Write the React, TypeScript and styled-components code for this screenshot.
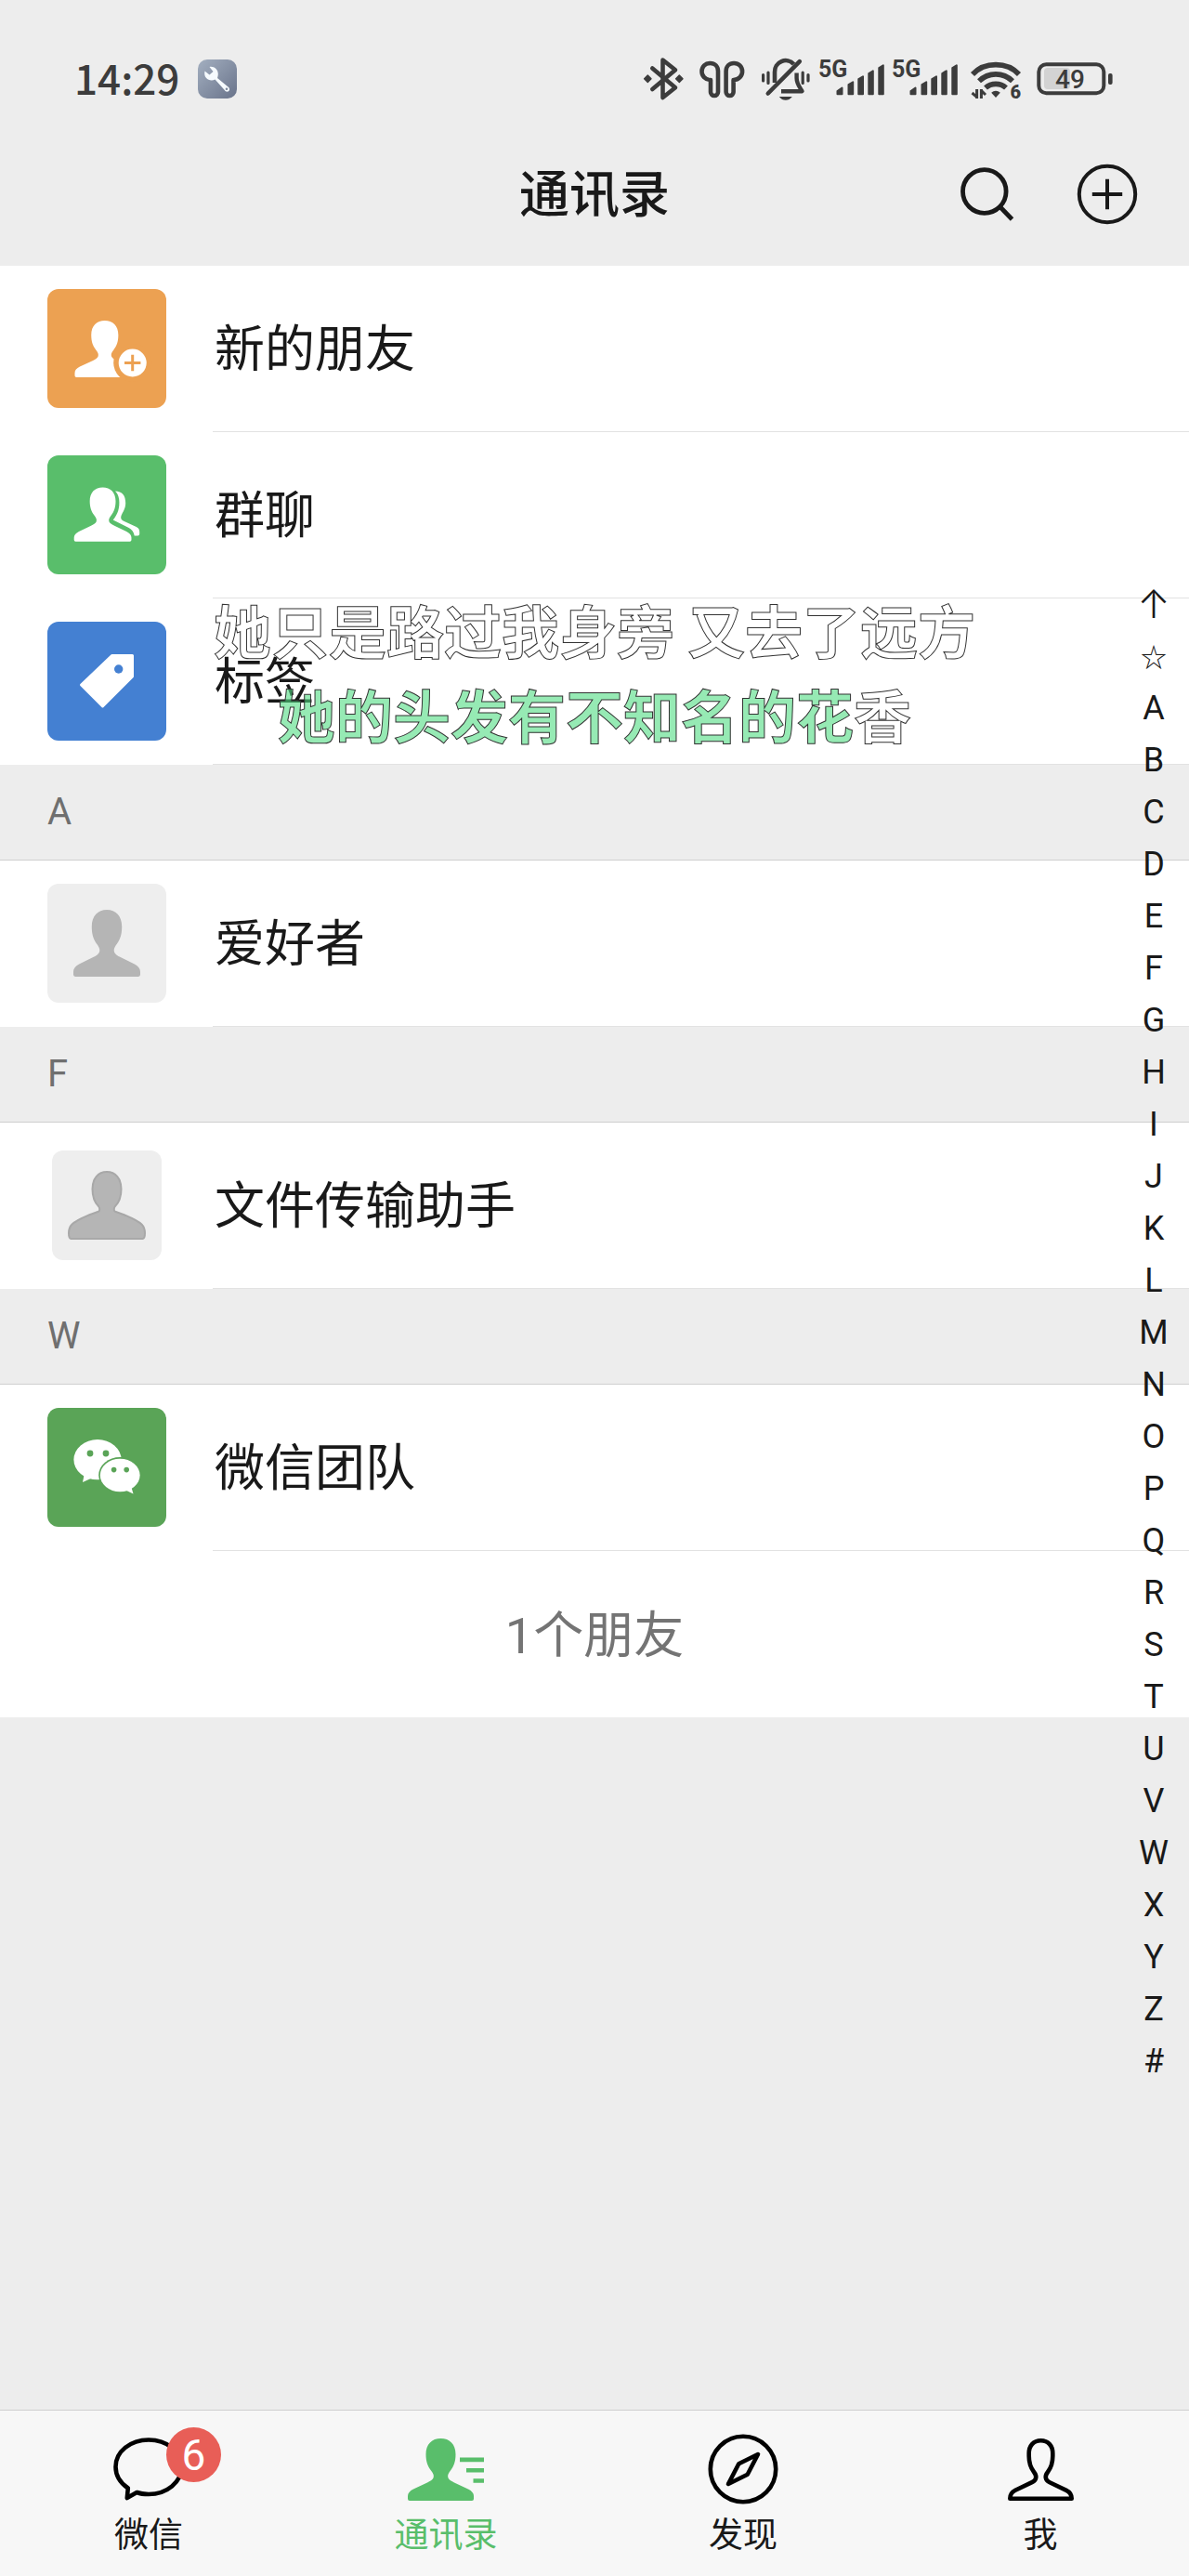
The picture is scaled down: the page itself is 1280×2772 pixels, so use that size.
import React from "react";
import styled, { createGlobalStyle } from "styled-components";

const GlobalStyle = createGlobalStyle`
  *, *::before, *::after { box-sizing: border-box; }
  body {
    margin: 0;
    background: #ededed;
    color: #191919;
    font-family: Roboto, "Noto Sans CJK SC", sans-serif;
  }
  a { color: inherit; text-decoration: none; }
  svg { display: block; flex: none; }
`;

const Screen = styled.div`
  position: relative;
  display: flex;
  flex-direction: column;
  min-height: 100vh;
`;

/* ---------- status bar ---------- */

const StatusBar = styled.div`
  display: flex;
  align-items: center;
  justify-content: space-between;
  height: 132px;
  padding: 38px 82px 0 80px;
  color: #3c3c3c;
`;

const StatusGroup = styled.div<{ $gap: number }>`
  display: flex;
  align-items: center;
  gap: ${(p) => p.$gap}px;
`;

const Clock = styled.time`
  padding-bottom: 4px;
  font-family: "Noto Sans CJK SC", sans-serif;
  font-size: 44px;
  line-height: 56px;
  font-weight: 500;
`;

const StatusText = styled.text<{ $size: number; $weight: number }>`
  font-family: Roboto, sans-serif;
  font-size: ${(p) => p.$size}px;
  font-weight: ${(p) => p.$weight};
  fill: #3c3c3c;
`;

const WrenchBadge = () => (
  <svg width="42" height="42" viewBox="0 0 42 42" aria-hidden="true">
    <defs>
      <linearGradient id="wrenchBg" x1="0" y1="0" x2="1" y2="1">
        <stop offset="0" stopColor="#a3afc0" />
        <stop offset="1" stopColor="#69738a" />
      </linearGradient>
    </defs>
    <rect width="42" height="42" rx="10" fill="url(#wrenchBg)" />
    <path
      d="M7.5 12.5 L12.5 16.5 L16.5 13 L12.5 8 C17 7 22 10.5 21.8 16 C21.7 17.5 21.4 18.8 21 20 L33.2 30 C34.8 32 34 34.3 32 34.6 C30.5 34.8 29.5 34 28.8 33 L18.5 21.5 C13.5 24.5 5.5 20.5 7.5 12.5Z"
      fill="#f6fbff"
    />
    <circle cx="31" cy="31.8" r="1.3" fill="#7d879b" />
  </svg>
);

const BluetoothIcon = () => (
  <svg width="48" height="50" viewBox="0 0 48 50" fill="none" stroke="currentColor" strokeWidth="4.6" strokeLinejoin="round" strokeLinecap="round" aria-hidden="true">
    <path d="M12.3 13.5 L37 34.3 L23.5 45 V4.5 L37 15.2 L12.3 36" />
    <path d="M7.3 21 L11 24.7 L7.3 28.4 L3.6 24.7Z M41.3 21 L45 24.7 L41.3 28.4 L37.6 24.7Z" fill="currentColor" strokeWidth="1.4" />
  </svg>
);

const budPath = "M19 26 C13 26 9.5 21.5 9.5 17 C9.5 11.5 13.5 8 18.5 8 C23.5 8 27 11.5 27 16.5 V39 A4 4 0 0 1 19 39 Z";

const EarbudsIcon = () => (
  <svg width="62" height="50" viewBox="0 0 62 50" fill="none" stroke="currentColor" strokeWidth="4.6" strokeLinejoin="round" aria-hidden="true">
    <path d={budPath} />
    <path d={budPath} transform="translate(62.6 0) scale(-1 1)" />
  </svg>
);

const MutedBellIcon = () => (
  <svg width="57" height="50" viewBox="0 0 57 50" fill="none" stroke="currentColor" strokeWidth="4.6" strokeLinecap="round" strokeLinejoin="round" aria-hidden="true">
    <path d="M18 29 V17.5 A11.8 11.8 0 0 1 38.5 9" strokeLinecap="butt" />
    <path d="M44.8 6.2 L10.8 40.5" />
    <path d="M41.6 18.5 V24 C41.6 30 44.5 33 47.5 38.2 H25" strokeWidth="4.4" strokeLinecap="butt" />
    <path d="M22.8 44 H36.8 C34.5 46.8 32.5 47.8 29.8 47.8 C27 47.8 25 46.8 22.8 44Z" fill="currentColor" stroke="none" />
    <path d="M5.6 20.5 V27 M11 18 V29.5 M48.2 18 V29.5 M54 20.5 V27" strokeWidth="3.2" />
  </svg>
);

const SignalIcon = () => (
  <svg width="71" height="50" viewBox="0 0 71 50" role="img" aria-label="5G">
    <StatusText x="0" y="23" $size={25} $weight={700}>5G</StatusText>
    <g fill="#3c3c3c" stroke="#3c3c3c" strokeWidth="2" strokeLinejoin="round">
      <path d="M20.5 41.3 V38 L25.5 34.5 V41.3Z" />
      <path d="M32.5 41.3 V31 L37.2 28.3 V41.3Z" />
      <path d="M43.3 41.3 V25 L48 22.3 V41.3Z" />
      <path d="M54.3 41.3 V19 L58.8 16.3 V41.3Z" />
      <path d="M65.3 41.3 V13 L69.8 10.3 V41.3Z" />
    </g>
  </svg>
);

const WifiIcon = () => (
  <svg width="66" height="50" viewBox="0 0 66 50" fill="none" stroke="currentColor" strokeWidth="5.6" aria-label="Wi-Fi 6" role="img">
    <path d="M8 20 C21 6.2 45 6.2 58 20" />
    <path d="M15 27.3 C25 17.4 41 17.4 51 27.3" />
    <path d="M22 34.5 C28 29 38 29 44 34.5" />
    <path d="M28.2 39.8 C31 37 35 37 37.8 39.8 L33 45Z" fill="currentColor" stroke="none" />
    <path d="M7.5 40 L12 43.8 M12.6 46 V36 M17.4 46 V36 M18 38.2 L22 42" strokeWidth="3" />
    <StatusText x="48.5" y="46" $size={20} $weight={900} stroke="none">6</StatusText>
  </svg>
);

const BatteryIcon = () => (
  <svg width="85" height="50" viewBox="0 0 85 50" role="img" aria-label="49%">
    <rect x="11" y="13" width="28" height="23" rx="4" fill="#d3d3d3" />
    <rect x="5.3" y="9.3" width="70" height="31" rx="8" fill="none" stroke="#3c3c3c" strokeWidth="4" />
    <rect x="80" y="19" width="4.6" height="12" rx="2" fill="#3c3c3c" />
    <StatusText x="23" y="35" $size={28} $weight={500}>49</StatusText>
  </svg>
);

/* ---------- title bar ---------- */

const TitleBar = styled.header`
  display: grid;
  grid-template-columns: 1fr auto 1fr;
  align-items: center;
  height: 154px;
  padding: 0 55px;
`;

const Title = styled.h1`
  grid-column: 2;
  margin: 0;
  padding-top: 4px;
  font-size: 54px;
  line-height: 72px;
  font-weight: 500;
`;

const TitleActions = styled.div`
  display: flex;
  align-items: center;
  justify-content: flex-end;
  gap: 67px;
`;

const IconButton = styled.button`
  display: block;
  padding: 0;
  border: 0;
  background: none;
  color: #191919;
  cursor: pointer;
`;

/* ---------- contact list ---------- */

const Main = styled.main`
  position: relative;
  flex: 1;
`;

const List = styled.ul`
  margin: 0;
  padding: 0;
  list-style: none;
  background: #fff;
`;

const Row = styled.a`
  display: flex;
  align-items: center;
  height: 179px;
  padding-left: 51px;
`;

const Avatar = styled.span<{ $bg: string; $inset?: boolean }>`
  display: flex;
  align-items: center;
  justify-content: center;
  flex: none;
  width: ${(p) => (p.$inset ? 118 : 128)}px;
  height: ${(p) => (p.$inset ? 118 : 128)}px;
  margin: ${(p) => (p.$inset ? "0 5px 2px" : "0 0 2px")};
  border-radius: 12px;
  background: ${(p) => p.$bg};
`;

const RowLabel = styled.span`
  display: flex;
  align-items: center;
  flex: 1;
  align-self: stretch;
  margin-left: 50px;
  padding: 4px 0 0 2px;
  border-bottom: 1px solid #e2e2e2;
  font-size: 54px;
  line-height: 72px;
`;

const SectionHeader = styled.h2`
  display: flex;
  align-items: center;
  height: 103px;
  margin: 0;
  padding-left: 51px;
  border-bottom: 1px solid #cfcfcf;
  background: #ededed;
  color: #6f6f6f;
  font-size: 40px;
  line-height: 48px;
  font-weight: 400;
`;

const FriendCount = styled.p`
  display: flex;
  align-items: center;
  justify-content: center;
  height: 179px;
  margin: 0;
  padding-top: 4px;
  background: #fff;
  color: #747474;
  font-size: 54px;
  line-height: 72px;
`;

const personPath =
  "M35.5 0 C45 0 51.5 6 51.5 17 C51.5 25 49.5 30 46 34.5 C43.5 37.5 42.5 40 43.5 42.5 C44.5 44.5 47 46 50 47.5 L65 54.5 C69 56.5 71 59 71 62 V65 Q71 67 69 67 H2 Q0 67 0 65 V62 C0 59 2 56.5 6 54.5 L21 47.5 C24 46 26.5 44.5 27.5 42.5 C28.5 40 27.5 37.5 25 34.5 C21.5 30 19.5 25 19.5 17 C19.5 6 26 0 35.5 0Z";

const NewFriendIcon = () => (
  <svg width="128" height="128" viewBox="0 0 128 128" aria-hidden="true">
    <path d={personPath} fill="#fff" transform="translate(29.5 34) scale(0.91)" />
    <circle cx="91.7" cy="79.5" r="20.5" fill="#eca152" />
    <circle cx="91.7" cy="79.5" r="15" fill="#fff" />
    <path d="M83 79.5 H100.4 M91.7 70.8 V88.2" stroke="#eca152" strokeWidth="3" />
  </svg>
);

const GroupIcon = () => (
  <svg width="128" height="128" viewBox="0 0 128 128" fill="#fff" aria-hidden="true">
    <path d={personPath} transform="translate(28.7 34.5) scale(0.87)" />
    <path
      transform="translate(28.7 34.5)"
      d="M44.3 4 C52 4 55.5 9 55.5 17 C55.5 24 51 28 50.5 32 C50.3 34 51.5 35 53 36 L66 42 C69.5 43.5 70.5 45 70.5 48 V50 Q70.5 52 68.5 52 H65 C64.5 48 62 45 58.5 43.3 L42 35 C47 29 49.5 22 48.5 13 C48 9 46.5 6 44.3 4Z"
    />
  </svg>
);

const TagIcon = () => (
  <svg width="128" height="128" viewBox="0 0 128 128" aria-hidden="true">
    <path d="M69.5 36.5 H91.5 V59 L59.5 91 L36.5 68Z" fill="#fff" stroke="#fff" strokeWidth="3" strokeLinejoin="round" />
    <circle cx="76.7" cy="51" r="4.7" fill="#4480d2" />
  </svg>
);

const DefaultPersonIcon = () => (
  <svg width="72" height="72" viewBox="0 0 71 67" preserveAspectRatio="none" fill="#b5b5b5" aria-hidden="true">
    <path d={personPath} />
  </svg>
);

const HelperPersonIcon = () => (
  <svg width="84" height="74" viewBox="0 0 84 74" aria-hidden="true">
    <path
      d="M42 1 C51.5 1 57.5 8.5 57.5 19.5 C57.5 28 54.5 34.5 51 38 C49.5 40 49.5 42 50.5 43.5 C62 47.5 73 51.5 79.5 57.5 C82.5 60.5 83 64 83 67 C83 70 82.5 73 80.5 73 H3.5 C1.5 73 1 70 1 67 C1 64 1.5 60.5 4.5 57.5 C11 51.5 22 47.5 33.5 43.5 C34.5 42 34.5 40 33 38 C29.5 34.5 26.5 28 26.5 19.5 C26.5 8.5 32.5 1 42 1Z"
      fill="#b5b5b5"
      stroke="#a8a8a8"
      strokeWidth="2"
    />
  </svg>
);

const WeChatIcon = () => (
  <svg width="128" height="128" viewBox="0 0 128 128" fill="#fff" aria-hidden="true">
    <ellipse cx="54" cy="55.7" rx="25.6" ry="21.6" />
    <path d="M40 70 L38 80 L49 75Z" />
    <ellipse cx="78.2" cy="72.5" rx="23" ry="19.5" fill="#5aa457" />
    <ellipse cx="78.2" cy="72.5" rx="21.4" ry="17.8" />
    <path d="M83 88 L92.5 92.5 L90 84Z" />
    <g fill="#5aa457">
      <circle cx="46" cy="49" r="3.4" />
      <circle cx="63" cy="49" r="3.4" />
      <circle cx="71.6" cy="66.6" r="2.8" />
      <circle cx="85.2" cy="66.6" r="2.8" />
    </g>
  </svg>
);

/* ---------- alphabet index ---------- */

const IndexBar = styled.nav`
  position: absolute;
  top: 336px;
  right: 0;
  display: flex;
  flex-direction: column;
  width: 76px;
`;

const IndexLink = styled.a<{ $size: number; $weight: number; $font: string }>`
  height: 56px;
  text-align: center;
  font-family: ${(p) => p.$font};
  font-size: ${(p) => p.$size}px;
  font-weight: ${(p) => p.$weight};
  line-height: 56px;
`;

/* ---------- floating lyrics ---------- */

const Lyrics = styled.div`
  position: absolute;
  top: 632px;
  left: 0;
  right: 0;
  text-align: center;
  pointer-events: none;
`;

const LyricLine = styled.p`
  margin: 0;
  font-family: "Noto Sans CJK SC", sans-serif;
  font-size: 62px;
  line-height: 91px;
  font-weight: 700;
  color: rgba(255, 255, 255, 0.6);
  -webkit-text-stroke: 1px #333;
`;

const Sung = styled.span`
  color: rgba(80, 220, 130, 0.6);
`;

/* ---------- bottom tabs ---------- */

const TabBar = styled.nav`
  display: grid;
  grid-template-columns: repeat(4, 1fr);
  border-top: 1px solid #cfcfcf;
  background: #f7f7f7;
`;

const Tab = styled.a<{ $active?: boolean }>`
  display: flex;
  flex-direction: column;
  align-items: center;
  gap: 14px;
  padding: 25px 0 23px;
  color: ${(p) => (p.$active ? "#59be6b" : "#191919")};
  font-size: 37px;
  line-height: 40px;
`;

const TabIcon = styled.span`
  position: relative;
  display: flex;
  align-items: center;
  justify-content: center;
  height: 76px;
`;

const Badge = styled.span`
  position: absolute;
  top: -7px;
  left: 57px;
  width: 59px;
  height: 59px;
  border-radius: 50%;
  background: #e85e57;
  color: #fff;
  font-size: 46px;
  line-height: 60px;
  text-align: center;
`;

const ChatTabIcon = () => (
  <svg width="76" height="68" viewBox="0 0 76 68" fill="none" stroke="#000" strokeWidth="4.6" strokeLinejoin="round" aria-hidden="true">
    <path d="M15.8 54.5 C7 48.5 2.5 40.5 2.5 31.5 C2.5 15 18.5 2.5 38 2.5 S73.5 15 73.5 31.5 S57.5 61 38 61 C33.5 61 29 60.5 25.3 59 L14.8 65 L15.8 54.5Z" />
  </svg>
);

const ContactsTabIcon = () => (
  <svg width="82" height="67" viewBox="0 0 82 67" fill="currentColor" aria-hidden="true">
    <path d={personPath} />
    <path d="M56 20.5 H82 V25.2 H56Z M63 32 H82 V36.6 H63Z M70.5 43.2 H82 V47.8 H70.5Z" />
  </svg>
);

const DiscoverTabIcon = () => (
  <svg width="76" height="76" viewBox="0 0 76 76" fill="none" stroke="#000" strokeWidth="4.6" strokeLinejoin="round" aria-hidden="true">
    <circle cx="38" cy="38" r="35.2" />
    <path d="M54 22 L33.3 32.3 L22 54 L42.7 43.7Z" />
  </svg>
);

const MeTabIcon = () => (
  <svg width="71" height="67" viewBox="0 0 71 67" fill="none" stroke="#000" strokeWidth="4.6" strokeLinejoin="round" aria-hidden="true">
    <path d="M35.5 2.3 C43.5 2.3 48.3 8 48.3 16 V19 C48.3 27 46.5 31.5 43 36 C39.5 40.5 40 44.8 45 47.2 L63 55.8 C67 57.8 68.7 60.5 68.7 64.7 H2.3 C2.3 60.5 4 57.8 8 55.8 L26 47.2 C31 44.8 31.5 40.5 28 36 C24.5 31.5 22.7 27 22.7 19 V16 C22.7 8 27.5 2.3 35.5 2.3Z" />
  </svg>
);

/* ---------- data ---------- */

const shortcuts = [
  { label: "新的朋友", bg: "#eca152", icon: <NewFriendIcon /> },
  { label: "群聊", bg: "#59be6b", icon: <GroupIcon /> },
  { label: "标签", bg: "#4480d2", icon: <TagIcon /> },
];

const sections = [
  { letter: "A", label: "爱好者", bg: "#eeeeee", icon: <DefaultPersonIcon />, inset: false },
  { letter: "F", label: "文件传输助手", bg: "#eeeeee", icon: <HelperPersonIcon />, inset: true },
  { letter: "W", label: "微信团队", bg: "#5aa457", icon: <WeChatIcon />, inset: false },
];

const latinFont = "Roboto, sans-serif";

const indexEntries = [
  { mark: "↑", size: 42, weight: 300, font: "Inter, sans-serif" },
  { mark: "☆", size: 28, weight: 400, font: '"Noto Sans CJK SC", sans-serif' },
  ..."ABCDEFGHIJKLMNOPQRSTUVWXYZ#".split("").map((mark) => ({ mark, size: 36, weight: 400, font: latinFont })),
];

const tabs = [
  { label: "微信", icon: <ChatTabIcon />, badge: 6 },
  { label: "通讯录", icon: <ContactsTabIcon />, active: true },
  { label: "发现", icon: <DiscoverTabIcon /> },
  { label: "我", icon: <MeTabIcon /> },
];

export default function App() {
  return (
    <Screen>
      <GlobalStyle />
      <StatusBar>
        <StatusGroup $gap={20}>
          <Clock>14:29</Clock>
          <WrenchBadge />
        </StatusGroup>
        <StatusGroup $gap={8}>
          <BluetoothIcon />
          <EarbudsIcon />
          <MutedBellIcon />
          <SignalIcon />
          <SignalIcon />
          <WifiIcon />
          <BatteryIcon />
        </StatusGroup>
      </StatusBar>

      <TitleBar>
        <Title>通讯录</Title>
        <TitleActions>
          <IconButton type="button" aria-label="搜索">
            <svg width="58" height="58" viewBox="0 0 58 58" fill="none" stroke="currentColor" strokeWidth="4.8">
              <circle cx="25.8" cy="26" r="23.3" />
              <path d="M42.5 42.5 L55.5 56" />
            </svg>
          </IconButton>
          <IconButton type="button" aria-label="添加">
            <svg width="66" height="66" viewBox="0 0 66 66" fill="none" stroke="currentColor" strokeWidth="4">
              <circle cx="33" cy="33" r="30.2" />
              <path d="M16.8 33 H49.2 M33 16.8 V49.2" />
            </svg>
          </IconButton>
        </TitleActions>
      </TitleBar>

      <Main>
        <List>
          {shortcuts.map((item) => (
            <li key={item.label}>
              <Row href="#">
                <Avatar $bg={item.bg}>{item.icon}</Avatar>
                <RowLabel>{item.label}</RowLabel>
              </Row>
            </li>
          ))}
        </List>
        {sections.map((s) => (
          <section key={s.letter} id={s.letter}>
            <SectionHeader>{s.letter}</SectionHeader>
            <List>
              <li>
                <Row href="#">
                  <Avatar $bg={s.bg} $inset={s.inset}>{s.icon}</Avatar>
                  <RowLabel>{s.label}</RowLabel>
                </Row>
              </li>
            </List>
          </section>
        ))}
        <FriendCount>1个朋友</FriendCount>

        <IndexBar aria-label="字母索引">
          {indexEntries.map((e) => (
            <IndexLink key={e.mark} href={"#" + e.mark} $size={e.size} $weight={e.weight} $font={e.font}>
              {e.mark}
            </IndexLink>
          ))}
        </IndexBar>
      </Main>

      <TabBar>
        {tabs.map((t) => (
          <Tab key={t.label} href="#" $active={t.active}>
            <TabIcon>
              {t.icon}
              {t.badge && <Badge>{t.badge}</Badge>}
            </TabIcon>
            <span>{t.label}</span>
          </Tab>
        ))}
      </TabBar>

      <Lyrics>
        <LyricLine>她只是路过我身旁 又去了远方</LyricLine>
        <LyricLine>
          <Sung>她的头发有不知名的花</Sung>香
        </LyricLine>
      </Lyrics>
    </Screen>
  );
}
